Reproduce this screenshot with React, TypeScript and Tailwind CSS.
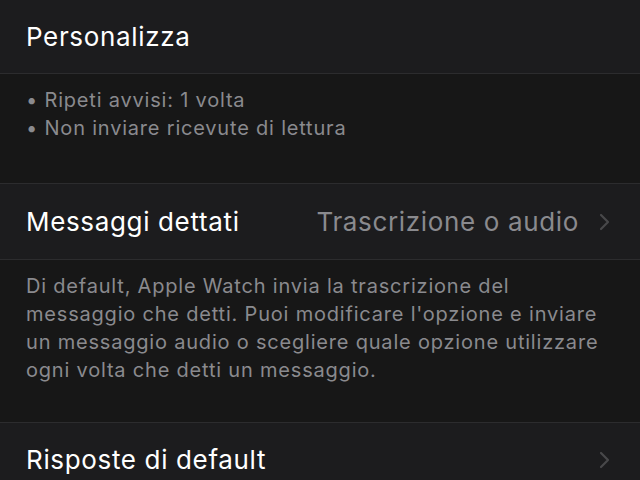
import { FC, ReactNode } from "react";

const Chevron: FC = () => (
  <svg width="11" height="18" viewBox="0 0 11 18" className="shrink-0">
    <path
      d="M2 2l7 7-7 7"
      fill="none"
      stroke="#48484a"
      strokeWidth="2.2"
      strokeLinecap="round"
      strokeLinejoin="round"
    />
  </svg>
);

const Row: FC<{ label: string; value?: string; chevron?: boolean; h: string }> = ({
  label,
  value,
  chevron,
  h,
}) => (
  <div className={`flex items-center bg-[#1c1c1e] pl-[26px] pr-[30px] ${h}`}>
    <span className="flex-1 text-[26px] leading-none tracking-[0.65px] text-white">
      {label}
    </span>
    {value && (
      <span className="mr-[20px] text-[26px] leading-none tracking-[0.65px] text-[#8a8a8e]">
        {value}
      </span>
    )}
    {chevron && <Chevron />}
  </div>
);

const Footer: FC<{ h: string; children: ReactNode }> = ({ h, children }) => (
  <div
    className={`bg-[#171717] px-[26px] pt-[12px] text-[20px] leading-[28px] tracking-[0.8px] text-[#8a8a8e] ${h}`}
  >
    {children}
  </div>
);

const Sep = () => <div className="h-px bg-[#2c2c2e]" />;

export default function App() {
  return (
    <div
      className="h-[480px] w-[640px] overflow-hidden bg-[#171717]"
      style={{ fontFamily: "Inter, 'Noto Sans', sans-serif" }}
    >
      <Row label="Personalizza" h="h-[73px]" />
      <Sep />
      <Footer h="h-[109px]">
        <p>• Ripeti avvisi: 1 volta</p>
        <p>• Non inviare ricevute di lettura</p>
      </Footer>
      <Sep />
      <Row label="Messaggi dettati" value="Trascrizione o audio" chevron h="h-[75px]" />
      <Sep />
      <Footer h="h-[162px]">
        <p>
          Di default, Apple Watch invia la trascrizione del
          <br />
          messaggio che detti. Puoi modificare l'opzione e inviare
          <br />
          un messaggio audio o scegliere quale opzione utilizzare
          <br />
          ogni volta che detti un messaggio.
        </p>
      </Footer>
      <Sep />
      <Row label="Risposte di default" chevron h="h-[74px]" />
    </div>
  );
}
